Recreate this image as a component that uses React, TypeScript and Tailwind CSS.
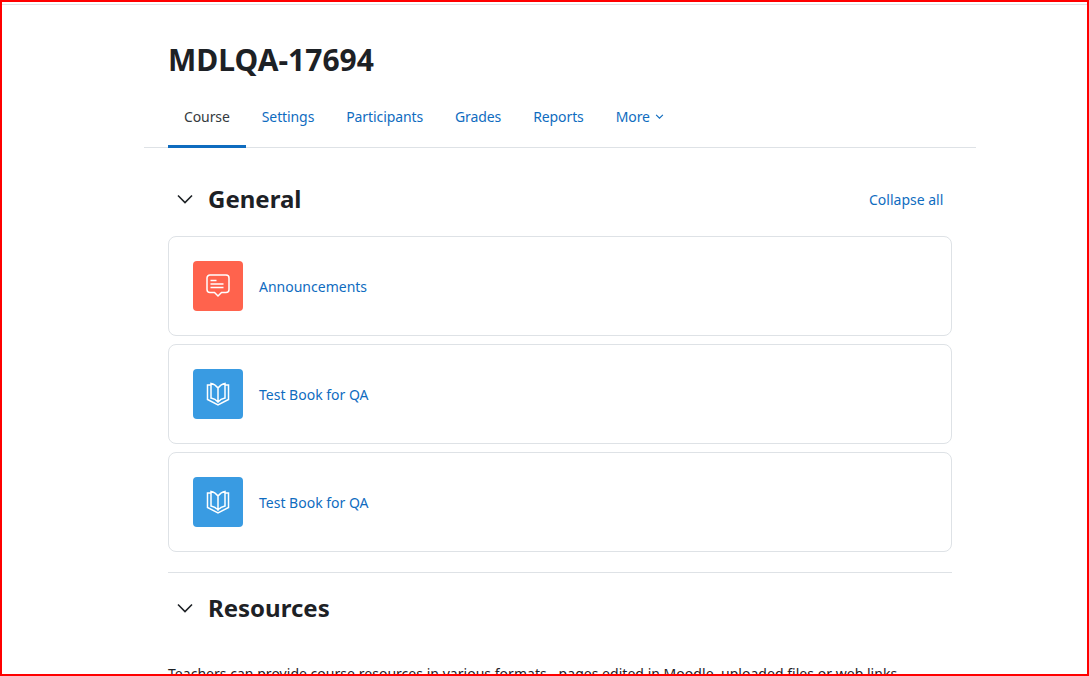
const FONT = "font-['Noto_Sans','Liberation_Sans',sans-serif]";

function ChevronDown() {
  return (
    <svg width="16" height="16" viewBox="0 0 16 16" fill="none" stroke="#1d2125" strokeWidth="1.6">
      <path d="M1 4.500 8 11.500l7-7" />
    </svg>
  );
}

function ForumIcon() {
  return (
    <svg width="24" height="24" viewBox="0 0 24 24" fill="none" stroke="#fff" strokeWidth="1.5">
      <path d="M4 1h16a3 3 0 0 1 3 3v11.500a3 3 0 0 1-3 3h-4.500l-3.500 3.500-3.500-3.500H4a3 3 0 0 1-3-3V4a3 3 0 0 1 3-3Z" />
      <path d="M4.500 6.500h6M4.500 10h13M4.500 13.500h13" />
    </svg>
  );
}

function BookIcon() {
  return (
    <svg width="24" height="24" viewBox="0 0 24 24" fill="none" stroke="#fff" strokeWidth="1.5">
      <path d="M5 1.500c3 .5 5 2 7 4.500 2-2.500 4-4 7-4.500V16c-3 .5-5 1.500-7 4-2-2.500-4-3.500-7-4ZM12 6v14" />
      <path d="M5 3H1.500v14.500L12 23l10.500-5.500V3H19" />
    </svg>
  );
}

function Activity({ name, color, icon }: { name: string; color: string; icon: React.ReactNode }) {
  return (
    <div className="h-[100px] rounded-lg border border-[#dee2e6] px-6 flex items-center gap-4">
      <div className={`w-[50px] h-[50px] rounded flex items-center justify-center ${color}`}>{icon}</div>
      <a className="text-[#0f6cbf] text-sm pt-0.5">{name}</a>
    </div>
  );
}

function SectionHeader({ title, action }: { title: string; action?: string }) {
  return (
    <div className="flex items-center h-[36px]">
      <div className="w-[40px] pl-[9px] flex items-center">
        <ChevronDown />
      </div>
      <h3 className="text-[24px] leading-[36px] font-bold text-[#1d2125]">{title}</h3>
      {action && <a className="ml-auto w-[83px] text-sm pt-0.5 text-[#0f6cbf] whitespace-nowrap">{action}</a>}
    </div>
  );
}

export default function App() {
  const tabs = ["Settings", "Participants", "Grades", "Reports"];
  return (
    <div className={`h-[676px] w-[1089px] overflow-hidden border-2 border-[#ff0000] bg-white ${FONT}`}>
      <div className="mt-[2px] h-px bg-[#dee2e6]" />
      <div className="w-[832px] ml-[142px]">
        <div className="pl-6 pt-[35px]">
          <h1 className="text-[30px] tracking-[0.02px] leading-[40px] font-bold text-[#1d2125]">MDLQA-17694</h1>
        </div>
        <nav className="mt-[9px] pl-6 flex h-[59px] border-b border-[#dee2e6] text-sm tracking-[-0.1px]">
          <a className="px-4 flex items-center text-[#343a40] border-b-[3px] border-[#0f6cbf] h-[59px]">Course</a>
          {tabs.map((tab) => (
            <a key={tab} className="px-4 flex items-center text-[#0f6cbf] border-b-[3px] border-transparent">{tab}</a>
          ))}
          <a className="px-4 flex items-center gap-[5px] text-[#0f6cbf] border-b-[3px] border-transparent">
            More
            <svg width="9" height="9" viewBox="0 0 16 16" fill="none" stroke="#0f6cbf" strokeWidth="2">
              <path d="M2 5.200 8 11l6-5.800" />
            </svg>
          </a>
        </nav>
        <div className="ml-6 w-[784px]">
          <div className="pt-[33px]">
            <SectionHeader title="General" action="Collapse all" />
          </div>
          <div className="mt-[19px] flex flex-col gap-2">
            <Activity name="Announcements" color="bg-[#ff634d]" icon={<ForumIcon />} />
            <Activity name="Test Book for QA" color="bg-[#399be2]" icon={<BookIcon />} />
            <Activity name="Test Book for QA" color="bg-[#399be2]" icon={<BookIcon />} />
          </div>
          <div className="mt-5 border-t border-[#dee2e6] pt-[17px]">
            <SectionHeader title="Resources" />
          </div>
          <p className="mt-[38px] text-sm tracking-[0.03px] text-[#1d2125] whitespace-nowrap">
            Teachers can provide course resources in various formats - pages edited in Moodle, uploaded files or web links.
          </p>
        </div>
      </div>
    </div>
  );
}
